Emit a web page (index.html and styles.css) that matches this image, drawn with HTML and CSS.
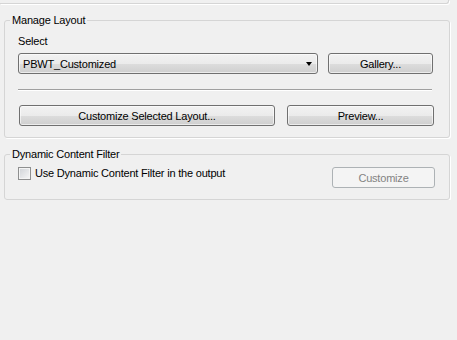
FILE: index.html
```html
<!DOCTYPE html>
<html lang="en">
<head>
    <meta charset="UTF-8">
    <title>Layout Options</title>
    <link rel="stylesheet" href="styles.css">
</head>
<body>
    <div class="prev-group"></div>

    <!-- Manage Layout -->
    <fieldset class="group group-layout">
        <legend>Manage Layout</legend>
        <div class="group-body">
            <div class="field-label">Select</div>
            <div class="row">
                <div class="combo">
                    <span class="combo-text">PBWT_Customized</span>
                    <span class="combo-arrow"></span>
                </div>
                <button class="btn btn-gallery">Gallery...</button>
            </div>
            <div class="separator"></div>
            <div class="row row-actions">
                <button class="btn btn-customize-layout">Customize Selected Layout...</button>
                <button class="btn btn-preview">Preview...</button>
            </div>
        </div>
    </fieldset>

    <!-- Dynamic Content Filter -->
    <fieldset class="group group-filter">
        <legend>Dynamic Content Filter</legend>
        <div class="group-body">
            <div class="row row-filter">
                <label class="check">
                    <input type="checkbox">
                    <span>Use Dynamic Content Filter in the output</span>
                </label>
                <button class="btn btn-filter" disabled>Customize</button>
            </div>
        </div>
    </fieldset>
</body>
</html>
```

FILE: styles.css
```css
body {
    margin: 0;
    background-color: #f0f0f0;
    font-family: "Liberation Sans", Arial, sans-serif;
    font-size: 11px;
    letter-spacing: -0.2px;
    color: #000;
}
.prev-group {
    width: 448px;
    height: 3px;
    border: 1px solid #d5d5d5;
    border-top: none;
    border-left: none;
    border-radius: 0 0 3px 0;
    box-shadow: 1px 1px 0 #fff;
}
.group {
    margin: 10px 0 0 4px;
    padding: 0;
    width: 444px;
    min-inline-size: 0;
    border: 1px solid #d5d5d5;
    border-radius: 3px;
    box-shadow: 1px 1px 0 #fff;
}
.group legend {
    margin-left: 5px;
    padding: 0 2px;
    line-height: 13px;
}
.group-body {
    padding: 0 15px 11px 13px;
}
.field-label {
    margin-top: 8px;
    line-height: 13px;
}
.row {
    display: flex;
    margin-top: 5px;
}
.combo {
    display: flex;
    align-items: center;
    width: 290px;
    height: 19px;
    padding: 0 4px;
    border: 1px solid #707070;
    border-radius: 3px;
    background: linear-gradient(#f2f2f2 0%, #ebebeb 50%, #dddddd 50%, #cfcfcf 100%);
    box-shadow: inset 0 0 0 1px rgba(255, 255, 255, 0.6);
}
.combo-text {
    flex: 1;
}
.combo-arrow {
    width: 0;
    height: 0;
    margin-right: 1px;
    border-left: 3.5px solid transparent;
    border-right: 3.5px solid transparent;
    border-top: 4px solid #000;
}
.btn {
    height: 21px;
    padding: 0;
    border: 1px solid #707070;
    border-radius: 3px;
    background: linear-gradient(#f2f2f2 0%, #ebebeb 50%, #dddddd 50%, #cfcfcf 100%);
    box-shadow: inset 0 0 0 1px rgba(255, 255, 255, 0.6);
    font-family: inherit;
    font-size: 11px;
    letter-spacing: -0.2px;
    color: #000;
}
.btn-gallery {
    width: 105px;
    margin-left: 10px;
}
.separator {
    margin: 15px 2px 0 0;
    border-top: 1px solid #a0a0a0;
    border-bottom: 1px solid #fff;
}
.row-actions {
    margin-top: 14px;
}
.btn-customize-layout {
    width: 256px;
    margin-left: 1px;
}
.btn-preview {
    width: 147px;
    margin-left: 12px;
}
.row-filter {
    margin-top: 6px;
    align-items: flex-start;
    justify-content: space-between;
}
.check {
    display: flex;
    align-items: center;
    gap: 4px;
    line-height: 13px;
}
.check input {
    appearance: none;
    width: 13px;
    height: 13px;
    margin: 0;
    border: 1px solid #8e8f8f;
    background: linear-gradient(135deg, #cfd2d6, #f7f7f7);
    box-shadow: inset 0 0 0 1px #f4f4f4;
}
.btn-filter {
    width: 103px;
    margin-right: -1px;
    border-color: #adb2b5;
    background: #f4f4f4;
    box-shadow: none;
    color: #838383;
}
```
